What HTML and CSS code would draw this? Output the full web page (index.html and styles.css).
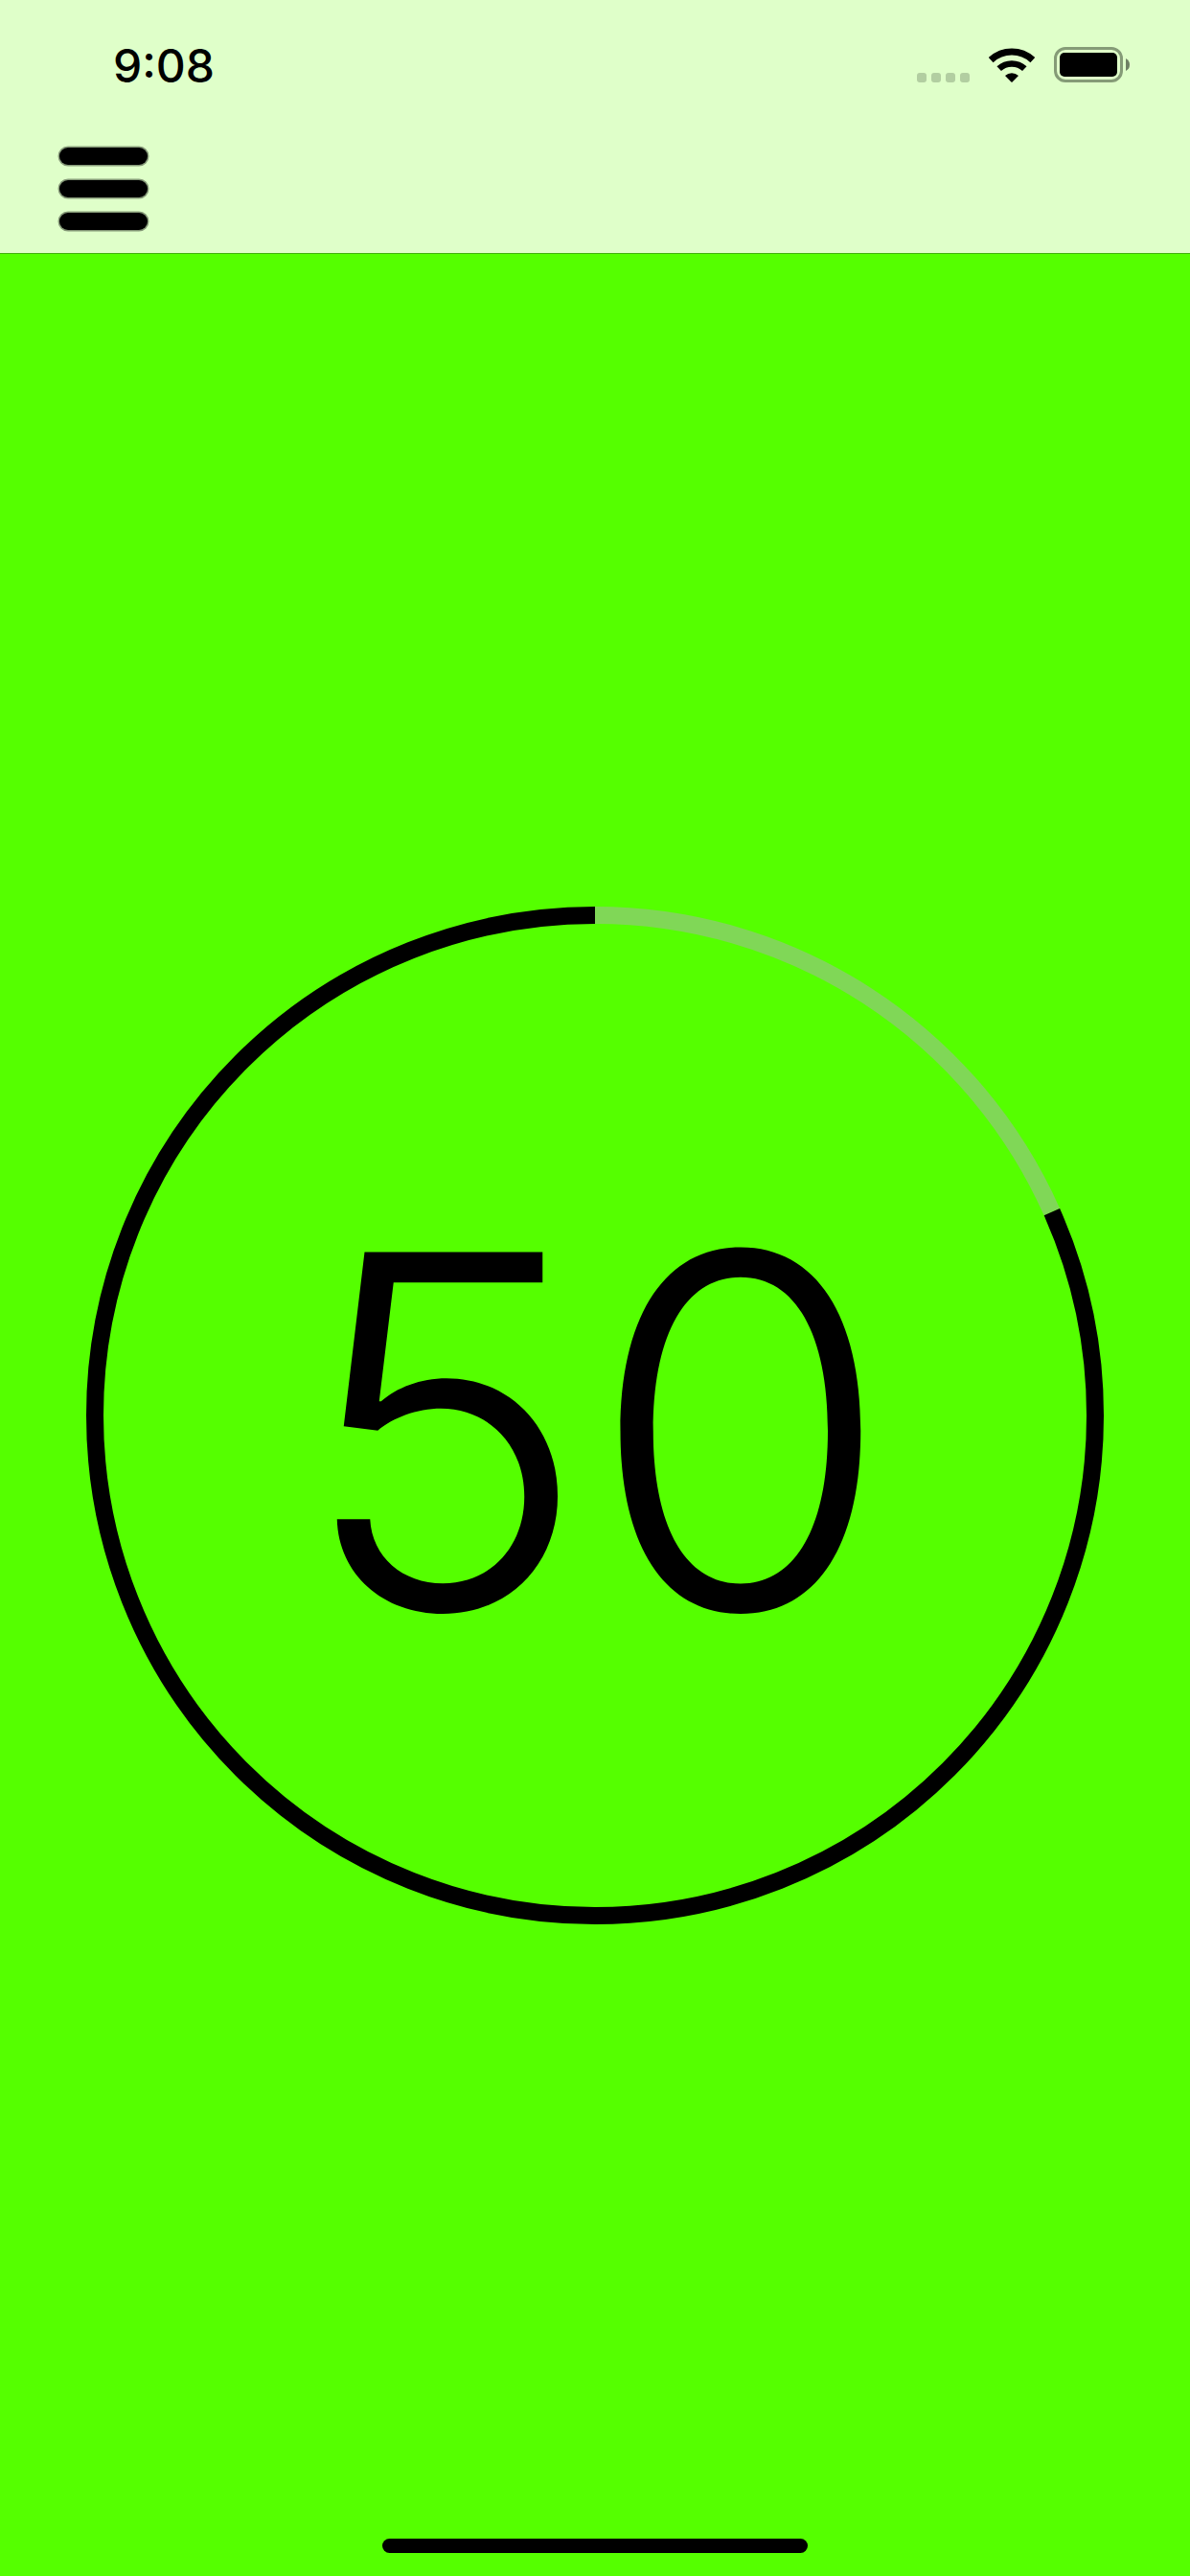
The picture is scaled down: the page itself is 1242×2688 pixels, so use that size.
FILE: index.html
```
<!DOCTYPE html>
<html lang="en">
<head>
    <meta charset="UTF-8">
    <meta name="viewport" content="width=device-width, initial-scale=1.0">
    <title>Timer</title>
    <link rel="stylesheet" href="styles.css">
</head>
<body>
    <header class="header">
        <div class="status-bar">
            <time class="clock">9:08</time>
            <div class="status-icons">
                <svg class="signal" width="55" height="36" viewBox="0 0 55 36">
                    <rect x="0" y="26" width="10" height="10" rx="3"/>
                    <rect x="15" y="26" width="10" height="10" rx="3"/>
                    <rect x="30" y="26" width="10" height="10" rx="3"/>
                    <rect x="45" y="26" width="10" height="10" rx="3"/>
                </svg>
                <svg class="wifi" width="48" height="36" viewBox="0 0 48 36">
                    <path d="M2.2 12.6A32 32 0 0 1 45.8 12.6" fill="none" stroke="#000" stroke-width="7"/>
                    <path d="M10.7 21.7A19.5 19.5 0 0 1 37.3 21.7" fill="none" stroke="#000" stroke-width="6.6"/>
                    <path d="M17 29A10.4 10.4 0 0 1 31 29L24.6 35.5Q24 36 23.4 35.5Z"/>
                </svg>
                <svg class="battery" width="80" height="38" viewBox="0 0 80 38">
                    <rect class="battery-case" x="1.5" y="1.5" width="69" height="34" rx="10.5"/>
                    <rect x="6" y="6" width="60" height="25" rx="5"/>
                    <path class="battery-tip" d="M75 12Q79 14 79 18.5T75 25Z"/>
                </svg>
            </div>
        </div>
        <nav class="nav-bar">
            <button type="button" class="menu-btn" aria-label="Menu">
                <svg width="96" height="92" viewBox="0 0 96 92">
                    <rect x="2" y="2" width="92" height="18" rx="9"/>
                    <rect x="2" y="36" width="92" height="18" rx="9"/>
                    <rect x="2" y="70" width="92" height="18" rx="9"/>
                </svg>
            </button>
        </nav>
    </header>

    <main class="timer">
        <div class="dial">
            <svg class="ring" viewBox="0 0 1062 1062">
                <g transform="rotate(-90 531 531)">
                    <circle class="ring-elapsed" cx="531" cy="531" r="522" pathLength="60"/>
                    <circle class="ring-left" cx="531" cy="531" r="522" pathLength="60"/>
                </g>
            </svg>
            <span class="seconds">50</span>
        </div>
    </main>

    <div class="home-indicator"></div>
</body>
</html>
```
FILE: styles.css
```
* {
    margin: 0;
    padding: 0;
    box-sizing: border-box;
}

body {
    min-height: 100vh;
    display: flex;
    flex-direction: column;
    background: #55ff00;
    color: #000;
    font-family: Inter, 'Liberation Sans', sans-serif;
}

.header {
    background: #dfffc9;
    border-bottom: 1px solid #40b30d;
}

.status-bar {
    height: 132px;
    padding: 4px 62px 0 118px;
    display: flex;
    align-items: center;
    justify-content: space-between;
}

.clock {
    font-size: 48px;
    font-weight: 500;
}

.status-icons {
    display: flex;
    align-items: center;
    gap: 20px;
}

.signal {
    fill: #b2cea1;
}

.battery-case {
    fill: none;
    stroke: #859b77;
    stroke-width: 3;
}

.battery-tip {
    fill: #6f8064;
}

.nav-bar {
    height: 132px;
    padding: 0 60px;
    display: flex;
    align-items: center;
}

.menu-btn {
    display: flex;
    background: none;
    border: none;
    cursor: pointer;
}

.menu-btn rect {
    stroke: rgba(0, 0, 0, 0.4);
    stroke-width: 3;
}

.timer {
    flex: 1;
    padding: 0 90px;
    display: flex;
    align-items: center;
    justify-content: center;
}

/* ring and number share one grid cell */
.dial {
    flex: 1;
    display: grid;
    place-items: center;
}

.ring,
.seconds {
    grid-area: 1 / 1;
}

.ring {
    width: 100%;
}

.ring circle {
    fill: none;
    stroke-width: 18;
}

.ring-elapsed {
    stroke: #80d757;
    stroke-dasharray: 11 49;
}

.ring-left {
    stroke: #000;
    stroke-dasharray: 49 11;
    stroke-dashoffset: -11;
}

.seconds {
    padding-top: 32px;
    font-size: 512px;
    font-weight: 300;
    line-height: 1;
}

.home-indicator {
    position: fixed;
    bottom: 24px;
    left: 50%;
    width: 444px;
    height: 15px;
    margin-left: -222px;
    border-radius: 8px;
    background: #000;
}
```
